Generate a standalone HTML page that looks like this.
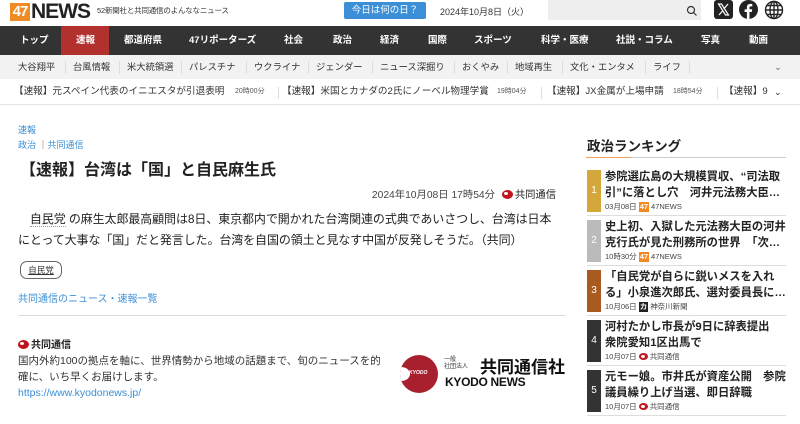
<!DOCTYPE html>
<html><head><meta charset="utf-8"><style>
*{margin:0;padding:0;box-sizing:border-box}
body{width:800px;height:424px;overflow:hidden;background:#fff;font-family:"Liberation Sans","Noto Sans CJK JP",sans-serif;color:#333;position:relative}
.a{position:absolute;white-space:nowrap}
.nav{position:absolute;top:26px;left:0;width:800px;height:29px;background:#333}
.nav span{position:absolute;top:0;line-height:29px;color:#fff;font-size:9.5px;font-weight:bold;white-space:nowrap}
.sub{position:absolute;top:55px;left:0;width:800px;height:24px;background:#f2f2f2}
.sub span{position:absolute;top:0;line-height:24px;font-size:9.3px;color:#333;white-space:nowrap}
.sep{position:absolute;width:1px;background:#ddd}
.tick{position:absolute;top:79px;left:0;width:800px;height:26px;border-bottom:1px solid #e5e5e5}
.tick span{position:absolute;line-height:26px;font-size:9.6px;color:#333;white-space:nowrap}
.tick i{position:absolute;line-height:26px;font-size:7px;color:#555;font-style:normal;white-space:nowrap}
.blue{color:#3b8fd6}
.rk{position:absolute;left:587px;width:199px;height:50px;border-bottom:1px solid #ddd}
.rk .n{position:absolute;left:0;top:4px;width:14px;height:42px;color:#fff;font-size:10px;text-align:center;line-height:42px}
.rk .t{position:absolute;left:18px;top:3px;width:182px;font-size:11.3px;font-weight:bold;line-height:16px;white-space:nowrap;overflow:hidden;color:#222}
.rk .m{position:absolute;left:18px;top:36px;font-size:7.5px;color:#444;line-height:10px;white-space:nowrap}
.b47{display:inline-block;background:#f08a24;color:#fff;font-weight:bold;padding:0 1px;margin:0 2px}
.kd{display:inline-block;width:9px;height:7px;border-radius:50%;background:#c0141e;position:relative;vertical-align:-1px;margin:0 2px}
.kd:after{content:"";position:absolute;left:2px;top:2px;width:4px;height:3px;border-radius:50%;background:#fff}
</style></head><body>
<div class="a" style="left:10px;top:3px;width:20px;height:18px;background:#f08a24;color:#fff;font-weight:bold;font-size:15px;line-height:18px;text-align:center;letter-spacing:-1px">47</div>
<div class="a" style="left:31px;top:1px;font-weight:bold;font-size:21px;line-height:22px;color:#222;letter-spacing:-1px">NEWS</div>
<div class="a" style="left:97px;top:5px;font-size:7.5px;letter-spacing:-0.2px">52新聞社と共同通信のよんななニュース</div>
<div class="a" style="left:344px;top:2px;width:82px;height:17px;background:#3b8fd6;border-radius:2px;color:#fff;font-size:9.5px;line-height:17px;text-align:center">今日は何の日？</div>
<div class="a" style="left:440px;top:5px;font-size:9px">2024年10月8日（火）</div>
<div class="a" style="left:548px;top:0;width:153px;height:20px;background:#eee"></div>
<svg class="a" style="left:686px;top:5px" width="12" height="12" viewBox="0 0 12 12"><circle cx="5" cy="5" r="3.5" fill="none" stroke="#333" stroke-width="1.2"/><path d="M7.5 7.5L10.5 10.5" stroke="#333" stroke-width="1.2"/></svg>
<svg class="a" style="left:714px;top:0" width="19" height="19" viewBox="0 0 19 19"><rect width="19" height="19" rx="3" fill="#222"/><path d="M4.5 4h3l7 11h-3z" fill="none" stroke="#fff" stroke-width="1.2"/><path d="M14 4l-4.3 5M9 10.5L5 15" stroke="#fff" stroke-width="1.2"/></svg>
<svg class="a" style="left:739px;top:0" width="19" height="19" viewBox="0 0 19 19"><circle cx="9.5" cy="9.5" r="9.5" fill="#222"/><path d="M10.5 19v-7h2.3l.4-2.7h-2.7V7.7c0-.8.3-1.3 1.4-1.3h1.4V4c-.3 0-1.1-.1-2-.1-2 0-3.4 1.2-3.4 3.5v2H5.6V12h2.3v7z" fill="#fff"/></svg>
<svg class="a" style="left:764px;top:0" width="20" height="20" viewBox="0 0 20 20" fill="none" stroke="#222" stroke-width="1.4"><circle cx="10" cy="10" r="8.5"/><ellipse cx="10" cy="10" rx="4" ry="8.5"/><path d="M1.5 10h17M10 1.5v17M3 5.5h14M3 14.5h14"/></svg>
<div class="nav">
<div style="position:absolute;left:61px;top:0;width:48px;height:29px;background:#b2312f"></div>
<span style="left:20px">トップ</span><span style="left:76px">速報</span><span style="left:124px">都道府県</span><span style="left:189px">47リポーターズ</span><span style="left:284px">社会</span><span style="left:333px">政治</span><span style="left:380px">経済</span><span style="left:428px">国際</span><span style="left:474px">スポーツ</span><span style="left:541px">科学・医療</span><span style="left:616px">社説・コラム</span><span style="left:701px">写真</span><span style="left:749px">動画</span>
</div>
<div class="sub">
<span style="left:18px">大谷翔平</span><span style="left:73px">台風情報</span><span style="left:127px">米大統領選</span><span style="left:189px">パレスチナ</span><span style="left:254px">ウクライナ</span><span style="left:316px">ジェンダー</span><span style="left:380px">ニュース深掘り</span><span style="left:462px">おくやみ</span><span style="left:515px">地域再生</span><span style="left:570px">文化・エンタメ</span><span style="left:653px">ライフ</span>
<span style="left:774px;color:#777">⌄</span>
<div class="sep" style="left:65px;top:6px;height:13px"></div><div class="sep" style="left:119px;top:6px;height:13px"></div><div class="sep" style="left:181px;top:6px;height:13px"></div><div class="sep" style="left:246px;top:6px;height:13px"></div><div class="sep" style="left:308px;top:6px;height:13px"></div><div class="sep" style="left:372px;top:6px;height:13px"></div><div class="sep" style="left:454px;top:6px;height:13px"></div><div class="sep" style="left:507px;top:6px;height:13px"></div><div class="sep" style="left:562px;top:6px;height:13px"></div><div class="sep" style="left:645px;top:6px;height:13px"></div><div class="sep" style="left:689px;top:6px;height:13px"></div>
</div>
<div class="tick">
<span style="left:14px">【速報】元スペイン代表のイニエスタが引退表明</span><i style="left:235px">20時00分</i>
<span style="left:282px">【速報】米国とカナダの2氏にノーベル物理学賞</span><i style="left:497px">19時04分</i>
<span style="left:547px">【速報】JX金属が上場申請</span><i style="left:673px">18時54分</i>
<span style="left:724px">【速報】9</span><span style="left:774px;font-size:9px">⌄</span>
<div class="sep" style="left:278px;top:8px;height:12px"></div><div class="sep" style="left:541px;top:8px;height:12px"></div><div class="sep" style="left:717px;top:8px;height:12px"></div>
</div>
<div class="a blue" style="left:18px;top:123px;font-size:9px">速報</div>
<div class="a blue" style="left:18px;top:138px;font-size:9px">政治 <span style="color:#555">｜</span>共同通信</div>
<div class="a" style="left:20px;top:156px;font-size:16px;font-weight:bold;color:#222">【速報】台湾は「国」と自民麻生氏</div>
<div class="a" style="right:244px;top:186px;font-size:10.3px;color:#444">2024年10月08日 17時54分 <span class="kd" style="width:11px;height:9px;margin-left:4px"></span><span style="color:#222">共同通信</span></div>
<div class="a" style="left:18px;top:209px;font-size:12px;line-height:21px;color:#222;letter-spacing:-0.1px">　<span style="border-bottom:1px dotted #999">自民党</span> の麻生太郎最高顧問は8日、東京都内で開かれた台湾関連の式典であいさつし、台湾は日本<br>にとって大事な「国」だと発言した。台湾を自国の領土と見なす中国が反発しそうだ。（共同）</div>
<div class="a" style="left:20px;top:261px;width:42px;height:18px;border:1px solid #666;border-radius:7px;font-size:8.5px;text-align:center;line-height:16px;text-decoration:underline">自民党</div>
<div class="a blue" style="left:18px;top:290px;font-size:10px">共同通信のニュース・速報一覧</div>
<div class="a" style="left:18px;top:315px;width:548px;height:1px;background:#ddd"></div>
<div class="a" style="left:18px;top:336px;font-size:10px;font-weight:bold;color:#222"><span class="kd" style="width:11px;height:9px;margin-left:0"></span>共同通信</div>
<div class="a" style="left:18px;top:353px;font-size:10.5px;line-height:16px;color:#333">国内外約100の拠点を軸に、世界情勢から地域の話題まで、旬のニュースを的<br>確に、いち早くお届けします。</div>
<div class="a blue" style="left:18px;top:387px;font-size:10.5px">https://www.kyodonews.jp/</div>
<div class="a" style="left:400px;top:355px;width:38px;height:38px;border-radius:50%;background:#a8202e;overflow:hidden"><div style="position:absolute;left:-8px;top:12px;width:18px;height:14px;border-radius:50%;background:#fff"></div><div style="position:absolute;left:9px;top:15px;font-size:5px;color:#fff;font-style:italic;font-weight:bold">KYODO</div></div>
<div class="a" style="left:444px;top:357px;font-size:6px;line-height:7px">一般<br>社団法人</div>
<div class="a" style="left:480px;top:353px;font-size:17px;font-weight:bold;color:#111">共同通信社</div>
<div class="a" style="left:445px;top:375px;font-size:12px;font-weight:bold;color:#111;letter-spacing:-0.3px">KYODO NEWS</div>
<div class="a" style="left:587px;top:135px;font-size:13.5px;font-weight:bold;color:#222">政治ランキング</div>
<div class="a" style="left:586px;top:157px;width:200px;height:1px;background:#ccc"></div>
<div class="a" style="left:586px;top:157px;width:45px;height:1px;background:#f0a060"></div>
<div class="rk" style="top:166px"><div class="n" style="background:#d4a73a">1</div><div class="t">参院選広島の大規模買収、“司法取<br>引”に落とし穴　河井元法務大臣…</div><div class="m">03月08日<span class="b47">47</span>47NEWS</div></div>
<div class="rk" style="top:216px"><div class="n" style="background:#bbb">2</div><div class="t">史上初、入獄した元法務大臣の河井<br>克行氏が見た刑務所の世界　「次…</div><div class="m">10時30分<span class="b47">47</span>47NEWS</div></div>
<div class="rk" style="top:266px"><div class="n" style="background:#a85a20">3</div><div class="t">「自民党が自らに鋭いメスを入れ<br>る」小泉進次郎氏、選対委員長に…</div><div class="m">10月06日<span class="b47" style="background:#222">カ</span>神奈川新聞</div></div>
<div class="rk" style="top:316px"><div class="n" style="background:#333">4</div><div class="t">河村たかし市長が9日に辞表提出<br>衆院愛知1区出馬で</div><div class="m">10月07日<span class="kd"></span>共同通信</div></div>
<div class="rk" style="top:366px"><div class="n" style="background:#333">5</div><div class="t">元モー娘。市井氏が資産公開　参院<br>議員繰り上げ当選、即日辞職</div><div class="m">10月07日<span class="kd"></span>共同通信</div></div>
</body></html>
